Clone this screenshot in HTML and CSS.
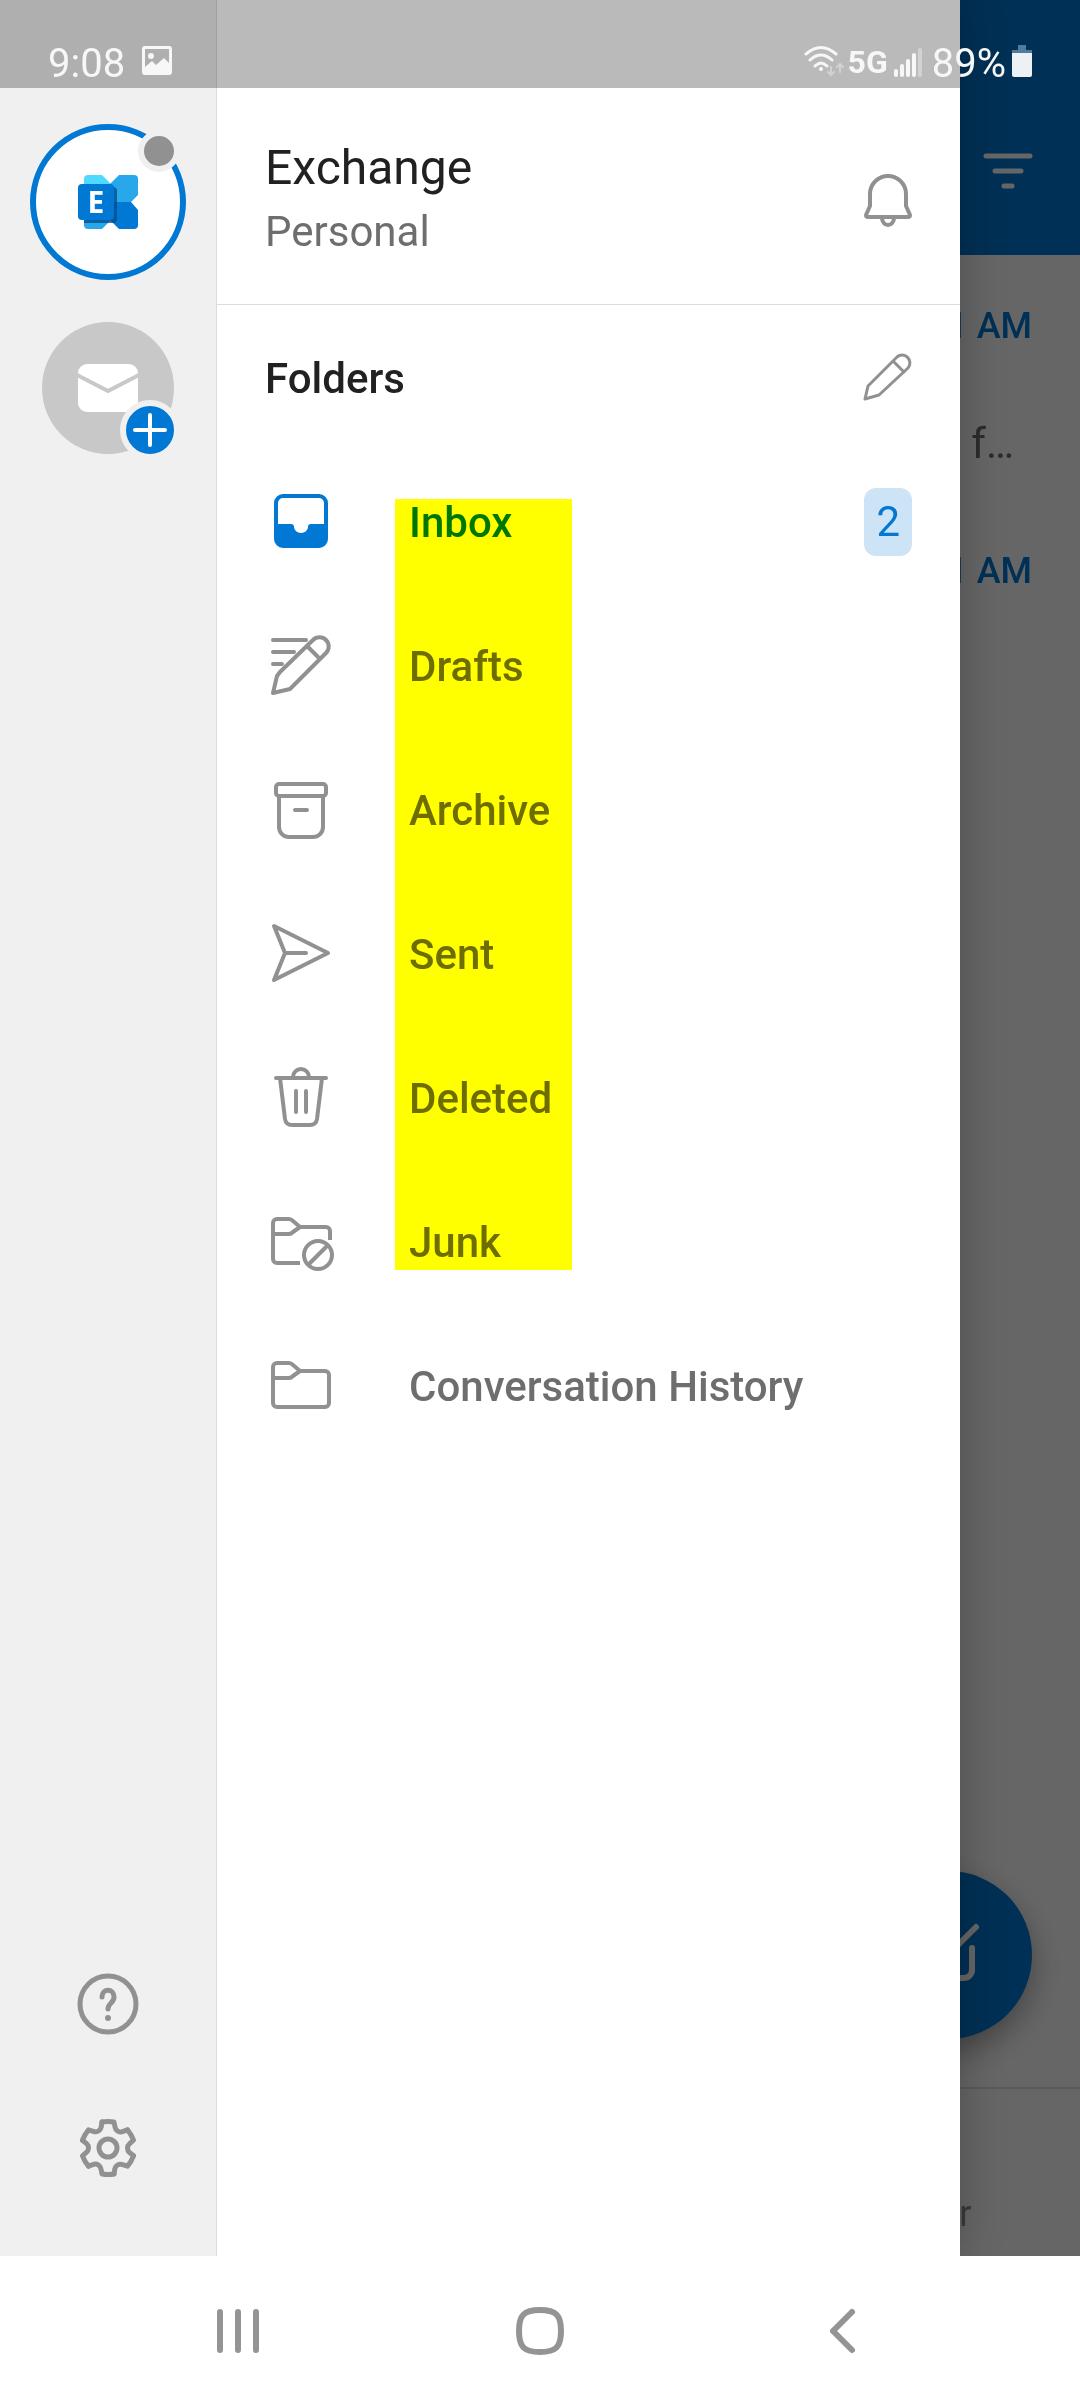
FILE: index.html
```html
<!DOCTYPE html>
<html lang="en">
<head>
    <meta charset="UTF-8">
    <meta name="viewport" content="width=device-width, initial-scale=1.0">
    <title>Folders</title>
    <link rel="stylesheet" href="styles.css">
</head>
<body>

    <div class="app">

        <!-- Mail list behind the drawer -->
        <main class="mail">
            <div class="mail-header">
                <button class="filter" aria-label="Filter">
                    <svg width="50" height="36" viewBox="0 0 50 36" stroke="#fff" stroke-width="5" stroke-linecap="round">
                        <path d="M3 3H47M12 18H38M21 33H29"/>
                    </svg>
                </button>
            </div>
            <div class="mail-list">
                <div class="message">
                    <span class="time">1 AM</span>
                    <span class="preview">f…</span>
                </div>
                <div class="message">
                    <span class="time">1 AM</span>
                </div>
            </div>
            <div class="tabs">
                <a class="tab" href="#">Calendar</a>
            </div>
            <button class="compose" aria-label="Compose">
                <svg width="72" height="72" viewBox="0 0 72 72" fill="none" stroke="#fff" stroke-width="6" stroke-linecap="round" stroke-linejoin="round">
                    <path d="M64 8L32 40M38 11H20a8 8 0 0 0-8 8V51a8 8 0 0 0 8 8H52a8 8 0 0 0 8-8V29"/>
                </svg>
            </button>
        </main>

        <div class="scrim"></div>

        <div class="drawer">
            <nav class="rail">
                <button class="account" aria-label="Exchange account">
                    <svg width="60" height="54" viewBox="0 0 60 54">
                        <path d="M10 0H24L33 9V27H6V4a4 4 0 0 1 4-4z" fill="#50d9ff"/>
                        <path d="M6 27H33V45L24 54H10a4 4 0 0 1-4-4z" fill="#28a8ea"/>
                        <path d="M41 0H56a4 4 0 0 1 4 4V20L53 27H27V14z" fill="#28a8ea"/>
                        <path d="M53 27L60 35V50a4 4 0 0 1-4 4H41L27 40V27z" fill="#0078d4"/>
                        <path d="M6 12H35a4 4 0 0 1 4 4V44a4 4 0 0 1-4 4H6z" fill="#004b87" opacity=".75"/>
                        <rect y="9" width="36" height="36" rx="4" fill="#0078d4"/>
                        <text x="18" y="38" text-anchor="middle" class="logo-letter">E</text>
                    </svg>
                    <span class="presence"></span>
                </button>
                <button class="add-account" aria-label="Add account">
                    <svg width="60" height="48" viewBox="0 0 60 48">
                        <rect width="60" height="48" rx="9" fill="#fff"/>
                        <path d="M-1 11L30 27L61 11" fill="none" stroke="#c8c8c8" stroke-width="4"/>
                    </svg>
                    <span class="plus">
                        <svg width="36" height="36" viewBox="0 0 36 36" stroke="#fff" stroke-width="4" stroke-linecap="round">
                            <path d="M18 3V33M3 18H33"/>
                        </svg>
                    </span>
                </button>
                <div class="rail-bottom">
                    <button class="rail-button" aria-label="Help">
                        <svg class="icon bold" viewBox="-36 -36 72 72">
                            <circle r="28"/>
                            <path d="M-6-7C-6-16 6-16 6-7C6-1 0-1 0 5"/>
                            <circle cy="14" r="3" fill="#919191" stroke="none"/>
                        </svg>
                    </button>
                    <button class="rail-button" aria-label="Settings">
                        <svg class="icon bold" viewBox="-36 -36 72 72">
                            <path id="tooth" d="M-6-26Q0-27 6-26L7-21C7.6-17.4 11.3-15.2 14.5-16.3L19.5-18.2"/>
                            <use href="#tooth" transform="rotate(60)"/>
                            <use href="#tooth" transform="rotate(120)"/>
                            <use href="#tooth" transform="rotate(180)"/>
                            <use href="#tooth" transform="rotate(240)"/>
                            <use href="#tooth" transform="rotate(300)"/>
                            <circle r="9"/>
                        </svg>
                    </button>
                </div>
            </nav>

            <section class="panel">
                <header class="panel-header">
                    <div class="names">
                        <h1>Exchange</h1>
                        <p>Personal</p>
                    </div>
                    <button class="icon-button" aria-label="Notifications">
                        <svg class="icon" viewBox="0 0 72 72">
                            <path d="M18 30a18 18 0 0 1 36 0V42L58 51q0 2-2 2H16q-2 0-2-2L18 42z"/>
                            <path d="M30 54a6 7 0 0 0 12 0"/>
                        </svg>
                    </button>
                </header>

                <div class="folders-header">
                    <h2>Folders</h2>
                    <button class="icon-button" aria-label="Edit folders">
                        <svg class="icon thin" viewBox="0 0 72 72">
                            <path d="M13 56L16 43L45 14a7.8 7.8 0 0 1 11 11L27 52zM41 18L52 29"/>
                        </svg>
                    </button>
                </div>

                <ul class="folders">
                    <li>
                        <a class="folder active" href="#">
                            <svg class="icon" viewBox="0 0 72 72">
                                <path d="M18 8H54a9 9 0 0 1 9 9V53a9 9 0 0 1-9 9H18a9 9 0 0 1-9-9V17a9 9 0 0 1 9-9zM18 12a5 5 0 0 0-5 5V38H26q3 0 3 3a7 6 0 0 0 14 0q0-3 3-3H59V17a5 5 0 0 0-5-5z" fill="#0078d4" fill-rule="evenodd" stroke="none"/>
                            </svg>
                            <span class="name">Inbox</span>
                            <span class="count">2</span>
                        </a>
                    </li>
                    <li>
                        <a class="folder" href="#">
                            <svg class="icon" viewBox="0 0 72 72">
                                <path d="M8 63L12 46L15 42L48 10a8.8 8.8 0 0 1 13 13L29 55L25 59zM42 16L55 29"/>
                                <path d="M8 10H41M8 22H29M8 34H17"/>
                            </svg>
                            <span class="name">Drafts</span>
                        </a>
                    </li>
                    <li>
                        <a class="folder" href="#">
                            <svg class="icon" viewBox="0 0 72 72">
                                <rect x="11" y="10" width="50" height="12" rx="3"/>
                                <path d="M14 22V53a10 10 0 0 0 10 10H48a10 10 0 0 0 10-10V22M30 36H42"/>
                            </svg>
                            <span class="name">Archive</span>
                        </a>
                    </li>
                    <li>
                        <a class="folder" href="#">
                            <svg class="icon" viewBox="0 0 72 72">
                                <path d="M9 8L63 35L9 62L20 35zM20 35H41"/>
                            </svg>
                            <span class="name">Sent</span>
                        </a>
                    </li>
                    <li>
                        <a class="folder" href="#">
                            <svg class="icon" viewBox="0 0 72 72">
                                <path d="M11 16H61M28 15a8 8 0 0 1 16 0M15 16L20 57q1 6 7 6H45q6 0 7-6L57 16M31 29V50M41 29V50"/>
                            </svg>
                            <span class="name">Deleted</span>
                        </a>
                    </li>
                    <li>
                        <a class="folder" href="#">
                            <svg class="icon butt" viewBox="0 0 72 72">
                                <path d="M65 34V25a4 4 0 0 0-4-4H35L28 15q-2-2-4-2H12a4 4 0 0 0-4 4V53a4 4 0 0 0 4 4H35M8 28H24q2 0 4-2L35 21"/>
                                <circle cx="53" cy="49" r="14"/>
                                <path d="M43 59L63 39"/>
                            </svg>
                            <span class="name">Junk</span>
                        </a>
                    </li>
                    <li>
                        <a class="folder" href="#">
                            <svg class="icon" viewBox="0 0 72 72">
                                <path d="M35 21H60a4 4 0 0 1 4 4V53a4 4 0 0 1-4 4H12a4 4 0 0 1-4-4V17a4 4 0 0 1 4-4H24q2 0 4 2zL28 26q-2 2-4 2H8"/>
                            </svg>
                            <span class="name">Conversation History</span>
                        </a>
                    </li>
                </ul>
            </section>
        </div>

        <div class="status-bar">
            <span>9:08</span>
            <svg class="picture" width="30" height="48" viewBox="0 0 30 48">
                <path fill="#f7f7f7" fill-rule="evenodd" d="M3 6H27a3 3 0 0 1 3 3V32a3 3 0 0 1-3 3H3a3 3 0 0 1-3-3V9a3 3 0 0 1 3-3zM3 9V27L10 21L14 25L22 18L27 23V9z"/>
                <circle cx="9" cy="16" r="3" fill="#f7f7f7"/>
            </svg>
            <svg class="wifi" width="40" height="48" viewBox="0 0 40 48" fill="none" stroke="#f7f7f7" stroke-width="3" stroke-linecap="round">
                <path d="M2 14Q17 1 32 14M6 20Q17 10 28 20M11 26Q17 20 23 26"/>
                <circle cx="17" cy="29" r="2" fill="#f7f7f7" stroke="none"/>
                <path d="M27 27V35M24 32L27 35L30 32M36 32V24M33 27L36 24L39 27" opacity=".4" stroke-width="2"/>
            </svg>
            <span class="network">5G</span>
            <svg class="signal" width="28" height="48" viewBox="0 0 28 48" fill="#f7f7f7">
                <rect y="29" width="4" height="8" rx="2"/>
                <rect x="6" y="24" width="4" height="13" rx="2"/>
                <rect x="12" y="19" width="4" height="18" rx="2"/>
                <rect x="18" y="13" width="4" height="24" rx="2"/>
                <rect x="24" y="8" width="4" height="29" rx="2" opacity=".4"/>
            </svg>
            <span>89%</span>
            <svg class="battery" width="20" height="48" viewBox="0 0 20 48">
                <path d="M6 5H14V10H20V14H0V10H6z" fill="#537a9b"/>
                <path d="M0 13H20V35a2 2 0 0 1-2 2H2a2 2 0 0 1-2-2z" fill="#edf1f5"/>
            </svg>
        </div>
    </div>

    <nav class="system-nav">
        <button aria-label="Recent apps">
            <svg width="48" height="48" viewBox="0 0 48 48" stroke-width="6">
                <path d="M6 5V43M24 5V43M42 5V43"/>
            </svg>
        </button>
        <button aria-label="Home">
            <svg width="48" height="48" viewBox="0 0 48 48" stroke-width="6">
                <path d="M24 3C40 3 45 8 45 24S40 45 24 45S3 40 3 24S8 3 24 3z"/>
            </svg>
        </button>
        <button aria-label="Back">
            <svg width="48" height="48" viewBox="0 0 48 48" stroke-width="6">
                <path d="M34 5L15 24L34 43"/>
            </svg>
        </button>
    </nav>

</body>
</html>
```
FILE: styles.css
```css
* {
    box-sizing: border-box;
}
body {
    display: flex;
    flex-direction: column;
    min-height: 100vh;
    margin: 0;
    background: white;
    color: #212121;
    font-family: Roboto, sans-serif;
    font-size: 42px;
    line-height: 56px;
}
h1, h2, p, ul {
    margin: 0;
    padding: 0;
    font-size: 42px;
}
button {
    display: flex;
    align-items: center;
    justify-content: center;
    padding: 0;
    border: none;
    background: none;
    cursor: pointer;
}
a {
    color: inherit;
    text-decoration: none;
}
svg {
    display: block;
    flex: none;
}
.app {
    position: relative;
    display: flex;
    flex: 1;
    overflow: hidden;
}

/* Mail list */
.mail {
    display: flex;
    flex: 1;
    flex-direction: column;
}
.mail-header {
    display: flex;
    justify-content: flex-end;
    height: 255px;
    padding: 153px 47px 0;
    background: #0078d4;
}
.filter {
    height: 36px;
}
.mail-list {
    flex: 1;
}
.message {
    display: flex;
    flex-direction: column;
    align-items: flex-end;
    gap: 62px;
    height: 245px;
    padding: 43px 48px 0;
}
.time {
    color: #0078d4;
    font-size: 36px;
    font-weight: 500;
}
.preview {
    padding-right: 18px;
    color: #6e6e6e;
}
.tabs {
    display: flex;
    justify-content: flex-end;
    align-items: flex-end;
    height: 169px;
    padding-bottom: 14px;
    border-top: 2px solid #e0e0e0;
}
.tab {
    width: 33.33%;
    color: #919191;
    font-size: 36px;
    text-align: center;
}
.compose {
    position: absolute;
    right: 48px;
    bottom: 217px;
    width: 168px;
    height: 168px;
    border-radius: 50%;
    background: #0078d4;
    box-shadow: 0 12px 30px rgba(0, 0, 0, 0.35);
}
.scrim {
    position: absolute;
    inset: 0;
    background: rgba(0, 0, 0, 0.6);
}

/* Drawer */
.drawer {
    position: absolute;
    top: 0;
    bottom: 0;
    left: 0;
    right: 120px;
    display: flex;
    background: white;
    box-shadow: 0 0 40px rgba(0, 0, 0, 0.25);
}
.drawer::after {
    content: "";
    position: absolute;
    top: 0;
    left: 0;
    right: 0;
    height: 88px;
    background: rgba(0, 0, 0, 0.27);
}
.rail {
    display: flex;
    flex-direction: column;
    align-items: center;
    width: 217px;
    padding: 124px 0 36px;
    border-right: 1px solid #dcdcdc;
    background: #f0f0f0;
}
.account {
    position: relative;
    width: 156px;
    height: 156px;
    border: 6px solid #0078d4;
    border-radius: 50%;
    background: white;
}
.presence {
    position: absolute;
    top: 0;
    right: 0;
    width: 42px;
    height: 42px;
    border: 6px solid #f0f0f0;
    border-radius: 50%;
    background: #919191;
}
.logo-letter {
    fill: white;
    font-family: "Open Sans", sans-serif;
    font-size: 30px;
    font-weight: 700;
}
.add-account {
    position: relative;
    width: 132px;
    height: 132px;
    margin-top: 42px;
    border-radius: 50%;
    background: #c8c8c8;
}
.plus {
    position: absolute;
    right: -6px;
    bottom: -6px;
    display: flex;
    align-items: center;
    justify-content: center;
    width: 60px;
    height: 60px;
    border: 6px solid #f0f0f0;
    border-radius: 50%;
    background: #0078d4;
}
.rail-bottom {
    margin-top: auto;
}
.rail-button {
    width: 144px;
    height: 144px;
}
.icon {
    width: 72px;
    height: 72px;
    fill: none;
    stroke: #919191;
    stroke-width: 4;
    stroke-linecap: round;
    stroke-linejoin: round;
}
.icon.thin {
    stroke-width: 3;
}
.icon.bold {
    stroke-width: 5;
}
.icon.butt {
    stroke-linecap: butt;
}
.panel {
    flex: 1;
    padding-top: 88px;
}
.panel-header {
    display: flex;
    align-items: center;
    justify-content: space-between;
    padding: 52px 36px 44px 48px;
    border-bottom: 1px solid #dcdcdc;
}
.names {
    display: flex;
    flex-direction: column;
    gap: 8px;
}
.names h1 {
    font-size: 48px;
    font-weight: 400;
}
.names p {
    color: #6e6e6e;
}
.folders-header {
    display: flex;
    align-items: center;
    justify-content: space-between;
    height: 145px;
    padding: 2px 36px 0 48px;
}
.folders-header h2 {
    font-weight: 500;
}
.folders {
    position: relative;
    list-style: none;
}
/* Marker over the default folder names */
.folders::after {
    content: "";
    position: absolute;
    top: 49px;
    bottom: 188px;
    left: 178px;
    width: 177px;
    background: #ffff00;
    mix-blend-mode: multiply;
    pointer-events: none;
}
.folder {
    display: flex;
    align-items: center;
    height: 144px;
    padding: 0 48px;
    color: #6e6e6e;
    font-weight: 500;
}
.folder.active {
    color: #0078d4;
}
.name {
    flex: 1;
    margin-left: 72px;
    padding-top: 2px;
}
.count {
    padding: 6px 12px;
    border-radius: 12px;
    background: #cde3f6;
    font-weight: 400;
}

/* Status bar */
.status-bar {
    position: absolute;
    top: 0;
    left: 0;
    right: 0;
    display: flex;
    height: 88px;
    padding: 40px 48px 0;
    color: #f7f7f7;
    font-size: 40px;
    line-height: 48px;
}
.picture {
    margin-left: 17px;
}
.wifi {
    margin-left: auto;
}
.network {
    margin: 0 6px 0 4px;
    font-family: "Liberation Sans Narrow", Roboto, sans-serif;
    font-size: 32px;
    font-weight: 700;
    line-height: 44px;
}
.signal {
    margin-right: 10px;
}
.battery {
    margin-left: 6px;
}

/* System navigation */
.system-nav {
    display: flex;
    height: 144px;
    padding: 6px 87px 0;
}
.system-nav button {
    flex: 1;
}
.system-nav svg {
    fill: none;
    stroke: #949494;
    stroke-linecap: round;
    stroke-linejoin: round;
}
```
